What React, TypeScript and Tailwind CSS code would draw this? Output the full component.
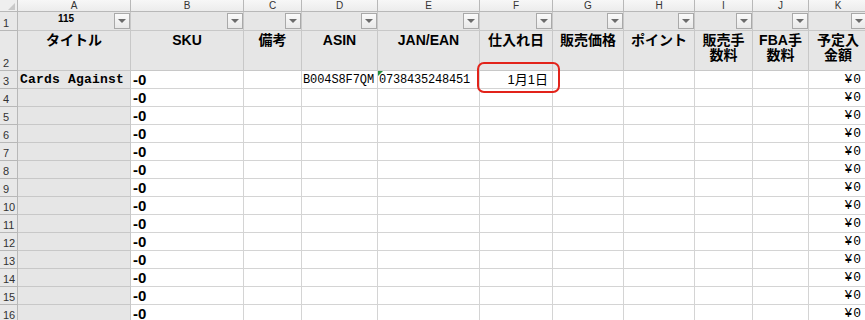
import React from 'react';

type Col = {
  letter: string;
  width: string;
  title: React.ReactNode;
};

const cols: Col[] = [
  { letter: 'A', width: 'w-[113px]', title: 'タイトル' },
  { letter: 'B', width: 'w-[113px]', title: 'SKU' },
  { letter: 'C', width: 'w-[58px]', title: '備考' },
  { letter: 'D', width: 'w-[76px]', title: 'ASIN' },
  { letter: 'E', width: 'w-[102px]', title: 'JAN/EAN' },
  { letter: 'F', width: 'w-[73px]', title: '仕入れ日' },
  { letter: 'G', width: 'w-[71px]', title: '販売価格' },
  { letter: 'H', width: 'w-[71px]', title: 'ポイント' },
  { letter: 'I', width: 'w-[58px]', title: <>販売手<br />数料</> },
  { letter: 'J', width: 'w-[56px]', title: <>FBA手<br />数料</> },
  { letter: 'K', width: 'w-[59px]', title: <>予定入<br />金額</> },
];

const dataRows = Array.from({ length: 14 }, (_, i) => i + 3);

const FilterButton: React.FC = () => (
  <div className="absolute right-0 top-[1px] flex h-[16px] w-[16px] items-center justify-center border border-[#a9a9a9] bg-gradient-to-b from-[#fafafa] to-[#e9e9e9]">
    <div className="h-0 w-0 border-x-[4px] border-t-[4px] border-x-transparent border-t-[#6b6b6b]" />
  </div>
);

const RowHeader: React.FC<{ n?: number; h: string }> = ({ n, h }) => (
  <div className={`${h} flex w-[18px] shrink-0 items-end border-r border-b border-[#b8b8b8] bg-[#e8e8e8] pl-[3px] text-[11px] leading-[13px] text-[#333]`}>
    {n}
  </div>
);

function cellContent(row: number, col: string): React.ReactNode {
  if (col === 'A' && row === 3) {
    return <span className="pl-[2px] font-['Liberation_Mono',monospace] text-[13px] font-bold tracking-[0.2px] text-black">Cards Against</span>;
  }
  if (col === 'B') {
    return <span className="pl-[2px] text-[15px] font-bold text-black">-0</span>;
  }
  if (row === 3 && col === 'D') {
    return <span className="pl-[1px] font-['Liberation_Mono',monospace] text-[12px] tracking-[-0.1px] text-black">B004S8F7QM</span>;
  }
  if (row === 3 && col === 'E') {
    return (
      <>
        <div className="absolute left-0 top-0 h-0 w-0 border-r-[5px] border-t-[5px] border-r-transparent border-t-[#1f8f3a]" />
        <span className="pl-[1px] font-['Liberation_Mono',monospace] text-[12px] tracking-[-0.2px] text-black">0738435248451</span>
      </>
    );
  }
  if (row === 3 && col === 'F') {
    return <span className="ml-auto pr-[4px] text-[13px] text-black">1月1日</span>;
  }
  if (col === 'K') {
    return <span className="ml-auto pr-[5px] font-['Liberation_Mono',monospace] text-[13px] tracking-[1px] text-black">¥0</span>;
  }
  return null;
}

export default function App() {
  return (
    <div className="relative h-[320px] w-[865px] overflow-hidden bg-white font-[Liberation_Sans,Noto_Sans_CJK_JP,sans-serif] select-none">
      {/* column letters */}
      <div className="flex h-[12px]">
        <div className="relative w-[18px] shrink-0 border-r border-b border-[#b8b8b8] bg-[#efefef]">
          <div className="absolute bottom-[1px] right-[2px] h-0 w-0 border-l-[7px] border-l-transparent border-b-[7px] border-b-[#c9c9c9]" />
        </div>
        {cols.map(c => (
          <div
            key={c.letter}
            className={`${c.width} flex shrink-0 items-center justify-center border-r border-b border-[#b8b8b8] bg-gradient-to-b from-[#f7f7f7] to-[#ececec] text-[10px] leading-none text-[#333]`}
          >
            {c.letter}
          </div>
        ))}
      </div>

      {/* row 1: filter row */}
      <div className="flex h-[19px]">
        <RowHeader n={1} h="h-[19px]" />
        {cols.map(c => (
          <div key={c.letter} className={`${c.width} relative shrink-0 border-r border-b border-[#c8c8c8] bg-[#e6e6e6]`}>
            {c.letter === 'A' && (
              <div className="pr-[16px] pt-[1px] text-center text-[10px] font-bold leading-[11px] text-black">115</div>
            )}
            <FilterButton />
          </div>
        ))}
      </div>

      {/* row 2: titles */}
      <div className="flex h-[40px]">
        <RowHeader n={2} h="h-[40px]" />
        {cols.map(c => (
          <div
            key={c.letter}
            className={`${c.width} shrink-0 border-r border-b border-[#c8c8c8] bg-[#e6e6e6] pt-[2px] text-center text-[14px] font-bold leading-[15px] text-black`}
          >
            {c.title}
          </div>
        ))}
      </div>

      {/* data rows */}
      {dataRows.map(r => (
        <div key={r} className="flex h-[18px]">
          <RowHeader n={r} h="h-[18px]" />
          {cols.map(c => (
            <div
              key={c.letter}
              className={`${c.width} relative flex shrink-0 items-center overflow-hidden whitespace-nowrap border-r border-b leading-none ${
                c.letter === 'A' ? 'border-[#c8c8c8] bg-[#e6e6e6]' : 'border-[#d4d4d4] bg-white'
              }`}
            >
              {cellContent(r, c.letter)}
            </div>
          ))}
        </div>
      ))}

      {/* highlight around the purchase date */}
      <div className="pointer-events-none absolute left-[477px] top-[62px] h-[31px] w-[83px] rounded-[7px] border-2 border-[#e2231a]" />
    </div>
  );
}
